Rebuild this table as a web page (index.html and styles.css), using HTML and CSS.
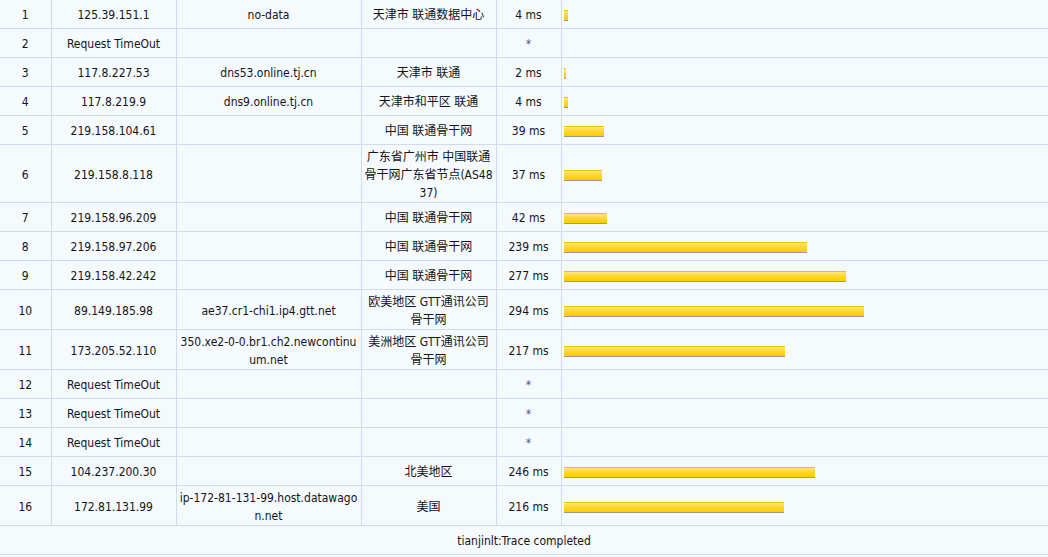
FILE: index.html
```html
<!DOCTYPE html>
<html>
<head>
<meta charset="utf-8">
<link rel="stylesheet" href="styles.css">
</head>
<body>
<table class="trace">
<colgroup>
<col class="c-no"><col class="c-ip"><col class="c-host"><col class="c-loc"><col class="c-ms"><col class="c-bar">
</colgroup>
<tbody>
<tr class="first"><td>1</td><td>125.39.151.1</td><td>no-data</td><td class="loc">天津市 联通数据中心</td><td>4 ms</td><td class="bar-cell"><span class="bar" style="width:4px"></span></td></tr>
<tr><td>2</td><td>Request TimeOut</td><td></td><td class="loc"></td><td class="star">*</td><td class="bar-cell"></td></tr>
<tr><td>3</td><td>117.8.227.53</td><td>dns53.online.tj.cn</td><td class="loc">天津市 联通</td><td>2 ms</td><td class="bar-cell"><span class="bar" style="width:2px"></span></td></tr>
<tr><td>4</td><td>117.8.219.9</td><td>dns9.online.tj.cn</td><td class="loc">天津市和平区 联通</td><td>4 ms</td><td class="bar-cell"><span class="bar" style="width:4px"></span></td></tr>
<tr><td>5</td><td>219.158.104.61</td><td></td><td class="loc">中国 联通骨干网</td><td>39 ms</td><td class="bar-cell"><span class="bar" style="width:40px"></span></td></tr>
<tr><td>6</td><td>219.158.8.118</td><td></td><td class="loc">广东省广州市 中国联通骨干网广东省节点(AS4837)</td><td>37 ms</td><td class="bar-cell"><span class="bar" style="width:38px"></span></td></tr>
<tr><td>7</td><td>219.158.96.209</td><td></td><td class="loc">中国 联通骨干网</td><td>42 ms</td><td class="bar-cell"><span class="bar" style="width:43px"></span></td></tr>
<tr><td>8</td><td>219.158.97.206</td><td></td><td class="loc">中国 联通骨干网</td><td>239 ms</td><td class="bar-cell"><span class="bar" style="width:243px"></span></td></tr>
<tr><td>9</td><td>219.158.42.242</td><td></td><td class="loc">中国 联通骨干网</td><td>277 ms</td><td class="bar-cell"><span class="bar" style="width:282px"></span></td></tr>
<tr><td>10</td><td>89.149.185.98</td><td>ae37.cr1-chi1.ip4.gtt.net</td><td class="loc">欧美地区 GTT通讯公司骨干网</td><td>294 ms</td><td class="bar-cell"><span class="bar" style="width:300px"></span></td></tr>
<tr><td>11</td><td>173.205.52.110</td><td>350.xe2-0-0.br1.ch2.newcontinuum.net</td><td class="loc">美洲地区 GTT通讯公司骨干网</td><td>217 ms</td><td class="bar-cell"><span class="bar" style="width:221px"></span></td></tr>
<tr><td>12</td><td>Request TimeOut</td><td></td><td class="loc"></td><td class="star">*</td><td class="bar-cell"></td></tr>
<tr><td>13</td><td>Request TimeOut</td><td></td><td class="loc"></td><td class="star">*</td><td class="bar-cell"></td></tr>
<tr><td>14</td><td>Request TimeOut</td><td></td><td class="loc"></td><td class="star">*</td><td class="bar-cell"></td></tr>
<tr><td>15</td><td>104.237.200.30</td><td></td><td class="loc">北美地区</td><td>246 ms</td><td class="bar-cell"><span class="bar" style="width:251px"></span></td></tr>
<tr><td>16</td><td>172.81.131.99</td><td>ip-172-81-131-99.host.datawagon.net</td><td class="loc">美国</td><td>216 ms</td><td class="bar-cell"><span class="bar" style="width:220px"></span></td></tr>
<tr><td colspan="6" class="done">tianjinlt:Trace completed</td></tr>
</tbody>
</table>
</body>
</html>
```

FILE: styles.css
```css
html, body {
  margin: 0;
  padding: 0;
  background: #f5fafc;
}
body {
  font-family: "DejaVu Sans Condensed", "DejaVu Sans", "Noto Sans CJK SC", sans-serif;
  font-size: 12px;
  color: #141420;
}
.trace {
  width: 1048px;
  table-layout: fixed;
  border-collapse: collapse;
}
.c-no { width: 51px; }
.c-ip { width: 125px; }
.c-host { width: 185px; }
.c-loc { width: 135px; }
.c-ms { width: 65px; }
.c-bar { width: 487px; }
.trace td {
  height: 29px;
  box-sizing: border-box;
  padding: 3px 1px 0;
  line-height: 18px;
  text-align: center;
  vertical-align: middle;
  border-right: 1px solid #d0dcee;
  border-bottom: 1px solid #d0dcee;
  word-break: break-all;
}
.trace tr.first td {
  height: 28px;
}
.trace td.bar-cell {
  border-right: none;
  text-align: left;
  padding-left: 2px;
  line-height: 0;
}
.trace td.done {
  border-right: none;
}
.star {
  color: #55608a;
}
.bar {
  display: inline-block;
  height: 9px;
  border-top: 1px solid #f2c200;
  border-bottom: 1px solid #9a9a8a;
  background: linear-gradient(#ffe680 0%, #ffd630 45%, #ffcc00 100%);
  vertical-align: middle;
  margin-top: 1px;
}
```
